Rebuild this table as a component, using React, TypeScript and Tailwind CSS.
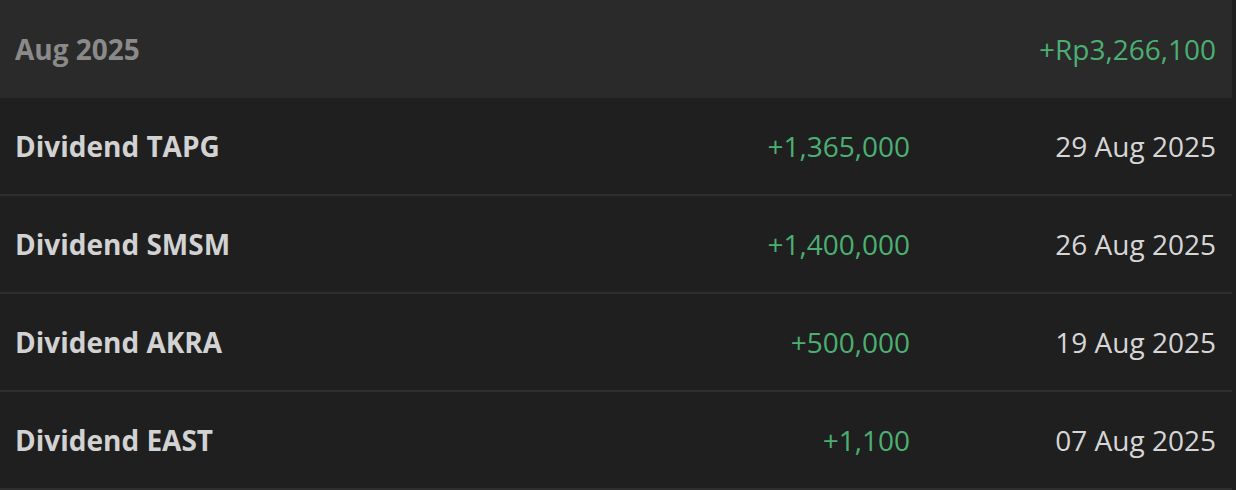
const rows = [
  { name: "Dividend TAPG", amount: "+1,365,000", date: "29 Aug 2025" },
  { name: "Dividend SMSM", amount: "+1,400,000", date: "26 Aug 2025" },
  { name: "Dividend AKRA", amount: "+500,000", date: "19 Aug 2025" },
  { name: "Dividend EAST", amount: "+1,100", date: "07 Aug 2025" },
];

export default function App() {
  return (
    <div className="min-h-[490px] w-[1236px] bg-[#1f1f1f] font-['Open_Sans',sans-serif] text-[28px]">
      <div className="w-[1232px]">
        <div className="flex h-[98px] items-center justify-between bg-[#2a2a2a] pl-[15px] pr-4">
          <span className="font-bold text-[#8a8a8a]">Aug 2025</span>
          <span className="text-[#4caf72]">+Rp3,266,100</span>
        </div>
        {rows.map((r) => (
          <div
            key={r.name}
            className="flex h-[98px] items-center border-b-2 border-[#2e2e2e] pl-[15px] pr-4"
          >
            <span className="flex-1 font-bold text-[#d2d2d2]">{r.name}</span>
            <span className="text-right text-[#4caf72]">{r.amount}</span>
            <span className="w-[306px] text-right text-[#d6d6d6]">{r.date}</span>
          </div>
        ))}
      </div>
    </div>
  );
}
